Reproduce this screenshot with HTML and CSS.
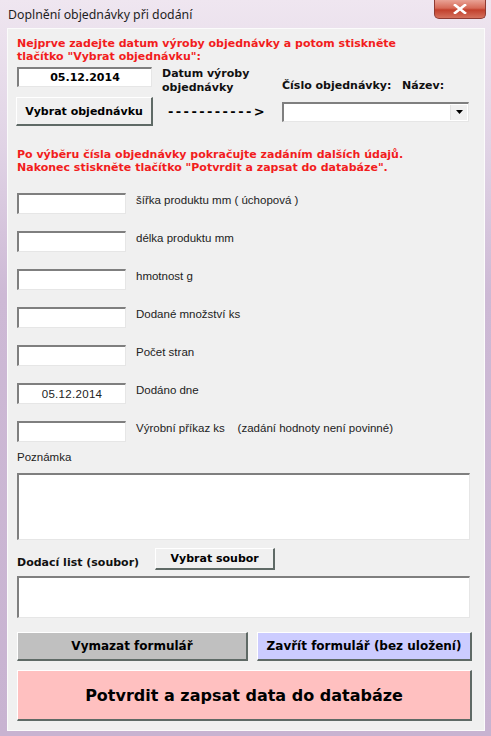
FILE: index.html
```html
<!DOCTYPE html>
<html lang="cs">
<head>
  <meta charset="UTF-8">
  <title>Doplnění objednávky při dodání</title>
  <link rel="stylesheet" href="styles.css">
</head>
<body>
  <div class="window">
    <!-- Title bar -->
    <div class="titlebar">
      <span class="title">Doplnění objednávky při dodání</span>
      <button class="close-btn" aria-label="Zavřít">
        <svg width="14" height="10" viewBox="0 0 14 10">
          <path d="M2 1 L12 9 M12 1 L2 9" stroke="#ffffff" stroke-width="2.6" stroke-linecap="square"/>
        </svg>
      </button>
    </div>

    <div class="client">
      <p class="hint">Nejprve zadejte datum výroby objednávky a potom stiskněte<br>tlačítko "Vybrat objednávku":</p>

      <div class="order-row">
        <div class="box date-box">05.12.2014</div>
        <div class="bold-label">Datum výroby<br>objednávky</div>
        <div class="bold-label low">Číslo objednávky:</div>
        <div class="bold-label low">Název:</div>
      </div>

      <div class="select-row">
        <button class="btn pick-btn">Vybrat objednávku</button>
        <span class="arrow">-----------&gt;</span>
        <div class="box combo">
          <span class="combo-arrow">
            <svg width="7" height="4" viewBox="0 0 7 4"><path d="M0 0 H7 L3.5 4 Z" fill="#000"/></svg>
          </span>
        </div>
      </div>

      <p class="hint second">Po výběru čísla objednávky pokračujte zadáním dalších údajů.<br>Nakonec stiskněte tlačítko "Potvrdit a zapsat do databáze".</p>

      <div class="fields">
        <div class="field"><div class="box field-box"></div><span>šířka produktu mm ( úchopová )</span></div>
        <div class="field"><div class="box field-box"></div><span>délka produktu mm</span></div>
        <div class="field"><div class="box field-box"></div><span>hmotnost g</span></div>
        <div class="field"><div class="box field-box"></div><span>Dodané množství ks</span></div>
        <div class="field"><div class="box field-box"></div><span>Počet stran</span></div>
        <div class="field"><div class="box field-box value">05.12.2014</div><span>Dodáno dne</span></div>
        <div class="field"><div class="box field-box"></div><span>Výrobní příkaz ks&nbsp;&nbsp;&nbsp;&nbsp;(zadání hodnoty není povinné)</span></div>
      </div>

      <div class="note-label">Poznámka</div>
      <div class="box note-box"></div>

      <div class="file-row">
        <span class="bold-label">Dodací list (soubor)</span>
        <button class="btn file-btn">Vybrat soubor</button>
      </div>
      <div class="box file-box"></div>

      <div class="action-row">
        <button class="btn clear-btn">Vymazat formulář</button>
        <button class="btn close-form-btn">Zavřít formulář (bez uložení)</button>
      </div>
      <button class="btn confirm-btn">Potvrdit a zapsat data do databáze</button>
    </div>
  </div>
</body>
</html>
```

FILE: styles.css
```css
/* Base */
body {
  margin: 0;
  font-family: 'Liberation Sans', Arial, sans-serif;
  font-size: 11.5px;
  color: #000000;
  background: #ffffff;
}
p {
  margin: 0;
}
button {
  font-family: 'DejaVu Sans', Verdana, sans-serif;
  color: #000000;
  cursor: pointer;
}

/* Window frame */
.window {
  width: 491px;
  height: 736px;
  box-sizing: border-box;
  padding: 0 6px 5px 7px;
  display: flex;
  flex-direction: column;
  background: linear-gradient(180deg, #efe6f0 0%, #e0d3e5 20%, #cdb9d5 40%, #c8b3d1 100%);
}
.titlebar {
  height: 28px;
  flex: none;
  display: flex;
  align-items: flex-start;
  justify-content: space-between;
}
.title {
  margin-top: 6px;
  margin-left: 1px;
  font-family: 'Noto Sans', 'Liberation Sans', sans-serif;
  font-size: 12.3px;
  color: #1e1e1e;
}
.close-btn {
  width: 52px;
  height: 19px;
  margin-right: -1px;
  padding: 0;
  border: 1px solid #8e3b32;
  border-top: none;
  border-radius: 0 0 5px 5px;
  background: linear-gradient(180deg, #e9a295 0%, #d66a57 45%, #c2402c 55%, #d4715d 100%);
  display: flex;
  align-items: center;
  justify-content: center;
}

/* Client area */
.client {
  flex: 1;
  background: #f0f0f0;
  border: 1px solid #fbfbfb;
  padding: 8px 12px 0 9px;
}
.hint {
  color: #f21d1d;
  font-family: 'DejaVu Sans', Verdana, sans-serif;
  font-weight: bold;
  font-size: 11px;
  line-height: 13px;
}
.hint.second {
  margin-top: 22px;
}
.bold-label {
  font-family: 'DejaVu Sans', Verdana, sans-serif;
  font-weight: bold;
  font-size: 11px;
  line-height: 14px;
  color: #111111;
}
.bold-label.low {
  align-self: end;
  margin-bottom: 2px;
}

/* Sunken boxes */
.box {
  box-sizing: border-box;
  background: #ffffff;
  border-style: solid;
  border-width: 2px 1px 1px 2px;
  border-color: #7f7f7f #e6e6e6 #e6e6e6 #7f7f7f;
}

/* Raised buttons */
.btn {
  box-sizing: border-box;
  font-weight: bold;
  font-size: 11px;
  padding: 0;
  border-style: solid;
  border-width: 1px 2px 2px 1px;
  border-color: #ffffff #5f6a66 #5f6a66 #ffffff;
  background: #f0f0f0;
}

/* Order selection */
.order-row {
  margin-top: 4px;
  display: grid;
  grid-template-columns: 145px 120px 120px 1fr;
  height: 27px;
}
.date-box {
  width: 135px;
  height: 20px;
  display: flex;
  align-items: center;
  justify-content: center;
  font-family: 'DejaVu Sans', Verdana, sans-serif;
  font-weight: bold;
  font-size: 11px;
}
.select-row {
  margin-top: 3px;
  display: grid;
  grid-template-columns: 151px 114px 187px;
  align-items: center;
}
.pick-btn {
  width: 137px;
  height: 29px;
  margin-left: -1px;
}
.arrow {
  font-family: 'DejaVu Sans', Verdana, sans-serif;
  font-weight: bold;
  font-size: 13px;
  letter-spacing: 2.4px;
}
.combo {
  height: 20px;
  display: flex;
  justify-content: flex-end;
  padding: 1px;
}
.combo-arrow {
  width: 16px;
  display: flex;
  align-items: center;
  justify-content: center;
  background: #f0f0f0;
  border-left: 1px solid #e2e2e2;
}

/* Data fields */
.fields {
  margin-top: 19px;
  display: flex;
  flex-direction: column;
  gap: 17px;
}
.field {
  display: flex;
  gap: 10px;
  line-height: 14px;
  color: #222222;
}
.field-box {
  width: 109px;
  height: 21px;
  flex: none;
}
.field-box.value {
  display: flex;
  align-items: center;
  justify-content: center;
  letter-spacing: 0.3px;
}
.note-label {
  margin-top: 8px;
  line-height: 14px;
  color: #222222;
}
.note-box {
  margin-top: 9px;
  width: 453px;
  height: 67px;
}
.file-row {
  margin-top: 8px;
  display: flex;
  align-items: flex-end;
  gap: 16px;
}
.file-btn {
  width: 120px;
  height: 22px;
}
.file-box {
  margin-top: 6px;
  width: 453px;
  height: 42px;
}

/* Bottom actions */
.action-row {
  margin-top: 14px;
  display: flex;
  justify-content: space-between;
}
.clear-btn {
  width: 231px;
  height: 29px;
  background: #c0c0c0;
  font-size: 12px;
}
.close-form-btn {
  width: 215px;
  height: 29px;
  background: #ccccff;
  font-size: 12px;
}
.confirm-btn {
  margin-top: 9px;
  width: 455px;
  height: 51px;
  background: #ffc0c0;
  font-size: 16px;
}
```
